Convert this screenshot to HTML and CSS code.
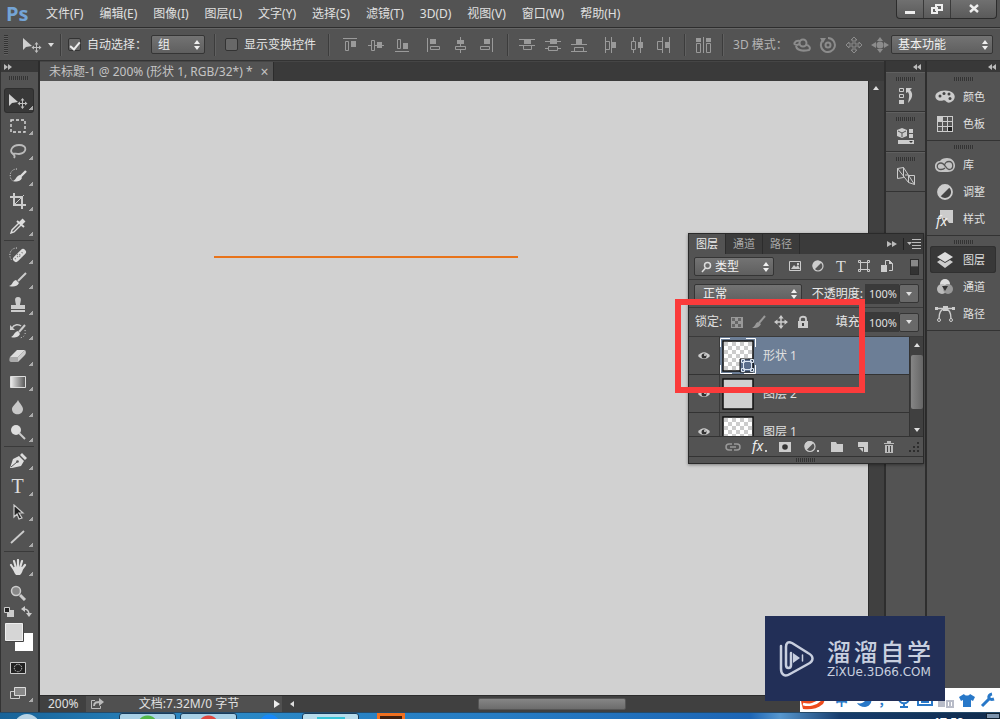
FILE: index.html
```html
<!DOCTYPE html>
<html lang="zh-CN">
<head>
<meta charset="utf-8">
<title>未标题-1</title>
<link rel="stylesheet" href="styles.css">
</head>
<body>
<svg class="defs" aria-hidden="true">
  <defs>
    <linearGradient id="g-grad"><stop offset="0" stop-color="#eee"/><stop offset="1" stop-color="#555"/></linearGradient>
    <pattern id="p-check" width="8" height="8" patternUnits="userSpaceOnUse"><path fill="#fff" d="M0 0h8v8H0z"/><path fill="#ccc" d="M0 0h4v4H0zM4 4h4v4H4z"/></pattern>
  </defs>
  <symbol id="updown" viewBox="0 0 8 10"><path fill="currentColor" d="M4 0l3 4H1zM4 10l3-4H1z"/></symbol>
  <symbol id="left2" viewBox="0 0 8 6"><path fill="currentColor" d="M4 0v6L0 3zM8 0v6L4 3z"/></symbol>
  <symbol id="right2" viewBox="0 0 8 6"><path fill="currentColor" d="M0 0v6l4-3zM4 0v6l4-3z"/></symbol>
  <symbol id="down" viewBox="0 0 6 4"><path fill="currentColor" d="M0 0h6L3 4z"/></symbol>
  <symbol id="up" viewBox="0 0 6 4"><path fill="currentColor" d="M0 4h6L3 0z"/></symbol>
  <symbol id="move" viewBox="0 0 20 16"><path fill="#d0d0d0" d="M1 1v12l3-3 6-1z"/><path fill="none" stroke="#c0c0c0" d="M14.500 6.500v8M10.500 10.500h8"/><path fill="#c0c0c0" d="M14.500 5l2 2.500h-4zM14.500 16l2-2.500h-4zM9.500 10.500L12 8.500v4zM19.500 10.500L17 8.500v4z"/></symbol>
  <symbol id="cross" viewBox="0 0 16 16"><path fill="none" stroke="currentColor" stroke-width="1.600" d="M8 3v10M3 8h10"/><path fill="currentColor" d="M8 0l3 4H5zM8 16l3-4H5zM0 8l4-3v6zM16 8l-4-3v6z"/></symbol>
</svg>

<header class="menubar">
  <span class="logo">Ps</span>
  <nav class="menus">
    <button>文件(F)</button><button>编辑(E)</button><button>图像(I)</button><button>图层(L)</button><button>文字(Y)</button><button>选择(S)</button><button>滤镜(T)</button><button>3D(D)</button><button>视图(V)</button><button>窗口(W)</button><button>帮助(H)</button>
  </nav>
  <div class="winctl">
    <button aria-label="最小化"><svg width="12" height="12"><path fill="#eee" d="M1 8h10v3H1z"/></svg></button>
    <button aria-label="还原"><svg width="12" height="12" fill="none" stroke="#eee" stroke-width="2"><path d="M5 2h6v5H5zM1 5h5v5H1z"/></svg></button>
    <button class="close" aria-label="关闭"><svg width="12" height="12"><path stroke="#eee" stroke-width="2.400" d="M2 2l8 7M10 2L2 9"/></svg></button>
  </div>
</header>

<section class="options">
  <i class="vgrip"></i>
  <svg class="cur" width="20" height="16"><use href="#move"/></svg>
  <svg class="caret" width="6" height="4"><use href="#down"/></svg>
  <i class="sep"></i>
  <label class="check"><input type="checkbox" checked>自动选择：</label>
  <span class="drop drop-group"><select aria-label="自动选择"><option>组</option></select><svg width="8" height="10"><use href="#updown"/></svg></span>
  <i class="sep"></i>
  <label class="check"><input type="checkbox">显示变换控件</label>
  <i class="sep wide"></i>
  <div class="aligns">
    <svg width="16" height="16"><path class="l" d="M1 1.500h14M3.500 4.500h3v9h-3z"/><path class="f" d="M9 4h5v6H9z"/></svg>
    <svg width="16" height="16"><path class="l" d="M0 8.500h3M7 8.500h9M3.500 3.500h3v10h-3z"/><path class="f" d="M9 5h5v6H9z"/></svg>
    <svg width="16" height="16"><path class="l" d="M1 14.500h14M3.500 2.500h3v9h-3z"/><path class="f" d="M9 6h5v6H9z"/></svg>
  </div>
  <div class="aligns">
    <svg width="16" height="16"><path class="l" d="M1.500 1v14M4.500 9.500h9v3h-9z"/><path class="f" d="M4 2h6v5H4z"/></svg>
    <svg width="16" height="16"><path class="l" d="M8.500 0v3M8.500 6v3M8.500 13v3M3.500 9.500h10v3h-10z"/><path class="f" d="M5 3h7v4H5z"/></svg>
    <svg width="16" height="16"><path class="l" d="M14.500 1v14M2.500 9.500h9v3h-9z"/><path class="f" d="M6 2h6v5H6z"/></svg>
  </div>
  <i class="sep"></i>
  <div class="aligns">
    <svg width="16" height="16"><path class="l" d="M0 2.500h16M0 8.500h16M4.500 8.500h8v4h-8z"/><path class="f" d="M5 2h7v5H5z"/></svg>
    <svg width="16" height="16"><path class="l" d="M0 4.500h16M0 11.500h3M13 11.500h3M3.500 9.500h9v4h-9z"/><path class="f" d="M5 2h7v5H5z"/></svg>
    <svg width="16" height="16"><path class="l" d="M0 7.500h16M0 14.500h16M3.500 10.500h9v4h-9z"/><path class="f" d="M5 2h6v5H5z"/></svg>
  </div>
  <div class="aligns">
    <svg width="16" height="16"><path class="l" d="M2.500 0v16M8.500 0v16M2.500 4.500h4v8h-4z"/><path class="f" d="M8 5h5v6H8z"/></svg>
    <svg width="16" height="16"><path class="l" d="M4.500 0v4M4.500 13v3M11.500 0v16M2.500 4.500h4v8h-4z"/><path class="f" d="M9 5h5v6H9z"/></svg>
    <svg width="16" height="16"><path class="l" d="M7.500 0v16M14.500 0v16M2.500 4.500h5v8h-5z"/><path class="f" d="M10 5h5v6h-5z"/></svg>
  </div>
  <i class="sep"></i>
  <svg class="auto" width="16" height="16"><path class="f" d="M0 1h5v4H0zM10 1h5v4h-5z"/><path class="l" d="M.5 6.500h4v9h-4zM7.500 0v16M10.500 6.500h4v9h-4z"/></svg>
  <i class="sep"></i>
  <span class="mode">3D 模式：</span>
  <div class="modes">
    <svg width="18" height="16" fill="none" stroke="#8c8c8c" stroke-width="2"><circle cx="10" cy="6" r="3.500"/><path d="M7 4C2 3-1 8 4 8l3-1M3 9c1 5 8 5 13 4 2-2 0-5-3-5"/></svg>
    <svg width="18" height="16" fill="none" stroke="#8c8c8c" stroke-width="2"><circle cx="9" cy="8" r="2.500"/><path d="M4 3a7 7 0 1 0 5-2"/><path fill="#8c8c8c" stroke="none" d="M1 1h6L4 6z"/></svg>
    <svg width="18" height="16" fill="#555" stroke="#8c8c8c"><path d="M9 0l3 3h-2v4h4V5l3 3-3 3V9h-4v4h2l-3 3-3-3h2V9H4v2L1 8l3-3v2h4V3H6z"/></svg>
    <svg width="18" height="16" fill="#8c8c8c"><circle cx="9" cy="8" r="3.500"/><path d="M9 0l3 4H6zM9 16l3-4H6zM0 8l5-3v6zM18 8l-5-3v6z"/></svg>
  </div>
  <span class="drop drop-work"><select aria-label="工作区"><option>基本功能</option></select><svg width="8" height="10"><use href="#updown"/></svg></span>
</section>

<main class="work">
  <aside class="tools">
    <div class="colhead"><svg width="8" height="6"><use href="#right2"/></svg></div>
    <i class="grip"></i>
    <div class="tgroup six">
      <button class="tool on" aria-label="移动"><svg width="20" height="16"><use href="#move"/></svg></button>
      <button class="tool" aria-label="选框"><svg width="20" height="16"><path fill="none" stroke="#ddd" stroke-width="1.400" stroke-dasharray="3 2" d="M3 2h14v12H3z"/></svg></button>
      <button class="tool" aria-label="套索"><svg width="20" height="16"><path fill="none" stroke="#bbb" stroke-width="1.800" d="M5 11C1 8 4 2 11 2c9 0 8 8 0 9-3 0-6-1-6 0s3 1 1 4"/></svg></button>
      <button class="tool" aria-label="快速选择"><svg width="20" height="16"><path fill="none" stroke="#ddd" stroke-dasharray="1 1.500" d="M9 1C0 1 1 13 6 13"/><path stroke="#ddd" stroke-width="2.400" d="M18 3l-6 6"/><path fill="#ddd" d="M12 7l2 3c-2 4-6 4-9 3 3-1 3-5 7-6z"/></svg></button>
      <button class="tool" aria-label="裁剪"><svg width="20" height="16"><path fill="none" stroke="#ccc" stroke-width="2" d="M6 0v12h12M2 4h12v12"/><path stroke="#ccc" d="M7 11l9-9"/></svg></button>
      <button class="tool" aria-label="吸管"><svg width="20" height="16"><path fill="none" stroke="#ddd" stroke-width="1.400" d="M11 5L4 12l-1 3 3-1 7-7"/><path stroke="#ddd" stroke-width="4" d="M12 6l4-4"/><path stroke="#ddd" stroke-width="2" d="M9 3l7 6"/></svg></button>
    </div>
    <div class="tgroup eight">
      <button class="tool" aria-label="修复画笔"><svg width="20" height="16"><path fill="none" stroke="#ddd" stroke-dasharray="1 1.500" d="M9 1C0 1 1 12 4 13"/><path stroke="#ddd" stroke-width="6" stroke-linecap="round" d="M8 12l7-7"/><path stroke="#777" stroke-width="1.500" stroke-dasharray="1 2" d="M7 12l9-8M9 7l5 4"/></svg></button>
      <button class="tool" aria-label="画笔"><svg width="20" height="16"><path stroke="#ccc" stroke-width="2" d="M18 1l-8 8"/><path fill="#ddd" d="M8 8l3 3c-2 4-6 4-10 3 4-1 3-5 7-6z"/></svg></button>
      <button class="tool" aria-label="图章"><svg width="20" height="16"><path fill="#ccc" d="M10 0c5 0 2 6 2 8h5v4H3V8h5c0-2-3-8 2-8zM3 13h14v2H3z"/></svg></button>
      <button class="tool" aria-label="历史画笔"><svg width="20" height="16"><path fill="none" stroke="#ccc" stroke-width="1.500" d="M4 5c2-4 7-4 9-2"/><path fill="#ccc" d="M2 2v5h5z"/><path stroke="#ccc" stroke-width="2" d="M17 2l-6 7"/><path fill="#ddd" d="M10 8l2 3c-2 4-6 4-9 3 3-1 3-5 7-6z"/><path fill="none" stroke="#ccc" stroke-dasharray="1 2" d="M17 7c1 5-1 7-5 8"/></svg></button>
      <button class="tool" aria-label="橡皮擦"><svg width="20" height="16"><path fill="#ddd" d="M9 2h8l-7 7H2z"/><path fill="#aaa" d="M2 9h8v5H3c-2 0-2-3-1-5z"/><path fill="#ccc" d="M10 9l7-7c2 3 0 5-1 6l-6 6z"/></svg></button>
      <button class="tool" aria-label="渐变"><svg width="20" height="16"><path fill="url(#g-grad)" stroke="#ddd" d="M2.500 2.500h15v11h-15z"/></svg></button>
      <button class="tool" aria-label="模糊"><svg width="20" height="16"><path fill="#c8c8c8" d="M10 1c2 4 5 6 5 9 0 7-11 7-11 0 0-3 4-5 6-9z"/></svg></button>
      <button class="tool" aria-label="减淡"><svg width="20" height="16"><circle cx="8" cy="6" r="5" fill="#ddd"/><path stroke="#ccc" stroke-width="2" d="M11 9l6 6"/></svg></button>
    </div>
    <div class="tgroup four">
      <button class="tool" aria-label="钢笔"><svg width="20" height="16"><path fill="#ddd" d="M2 15l3-9 6-3 5 5-3 5-9 2zM12 2l2-2 5 5-2 2z"/><path stroke="#555" d="M3 14l6-5"/><circle cx="9.500" cy="8.500" r="1.300" fill="#555"/></svg></button>
      <button class="tool" aria-label="文字"><span class="tee">T</span></button>
      <button class="tool" aria-label="路径选择"><svg width="20" height="16"><path fill="#222" stroke="#ccc" stroke-width="1.200" d="M6 1v12l3-3 2 5 3-1-3-5h4z"/></svg></button>
      <button class="tool" aria-label="直线"><svg width="20" height="16"><path stroke="#ccc" stroke-width="1.800" d="M3 14L16 2"/></svg></button>
    </div>
    <div class="tgroup two">
      <button class="tool" aria-label="抓手"><svg width="20" height="16"><path fill="none" stroke="#ddd" stroke-width="2.200" stroke-linecap="round" d="M3 6l4 6M6 2l2 7M10 1v8M14 2l-2 7M17 6l-3 4"/><path fill="#ddd" d="M6 8h9c0 4-1 6-3 8H8c-2-2-3-5-2-8z"/></svg></button>
      <button class="tool plain" aria-label="缩放"><svg width="20" height="16"><circle cx="8" cy="6" r="4.500" fill="#888" stroke="#ccc" stroke-width="1.500"/><path stroke="#ccc" stroke-width="3" d="M12 10l5 5"/></svg></button>
    </div>
    <div class="mini">
      <svg width="12" height="12"><path fill="#ccc" d="M4 4h7v7H4z"/><path fill="#222" stroke="#ccc" d="M1.500 1.500h5v5h-5z"/></svg>
      <svg width="12" height="12"><path fill="none" stroke="#ccc" stroke-width="1.500" d="M3 3c4 0 5 2 5 6"/><path fill="#ccc" d="M0 3l4-3v6zM5 7h6l-3 4z"/></svg>
    </div>
    <svg class="swatches" width="30" height="30"><path fill="#fff" d="M11 11h18v18H11z"/><path fill="#d6d6d6" stroke="#eee" d="M1.500 1.500h17v17h-17z"/><path fill="none" stroke="#444" d="M19.500 1v18.500H1"/></svg>
    <button class="tool plain" aria-label="快速蒙版"><svg width="20" height="16"><path fill="#222" stroke="#ccc" d="M2.500 2.500h15v11h-15z"/><circle cx="10" cy="8" r="3.700" fill="none" stroke="#ccc" stroke-dasharray="1.500 1"/></svg></button>
    <button class="tool" aria-label="屏幕模式"><svg width="20" height="16"><path fill="#555" stroke="#ccc" d="M2.500 6.500h9v7h-9z"/><path fill="#888" stroke="#ddd" d="M6.500 2.500h11v8h-11z"/></svg></button>
  </aside>

  <section class="doc">
    <div class="tabs"><div class="tab"><span>未标题-1 @ 200% (形状 1, RGB/32*) *</span><button aria-label="关闭文档">×</button></div></div>
    <div class="stage">
      <div class="canvas"><svg class="shape" viewBox="0 0 828 4"><path stroke="#e8731a" stroke-width="2" d="M174 2h304"/></svg></div>
      <div class="vscroll"><svg width="6" height="4"><use href="#up"/></svg></div>
    </div>
    <div class="status">
      <span class="zoom">200%</span>
      <div class="info"><svg width="14" height="12" fill="none" stroke="#bbb"><path d="M5 2.500H1.500v8h9V8"/><path stroke-width="2" d="M4 8c0-4 3-4 6-4"/><path fill="#bbb" stroke="none" d="M9 0l5 4-5 4z"/></svg><span>文档:7.32M/0 字节</span><svg class="play" width="6" height="8"><path fill="#eee" d="M0 0l6 4-6 4z"/></svg></div>
      <svg width="4" height="6"><path fill="#ddd" d="M4 0v6L0 3z"/></svg>
      <div class="track"><i class="thumb"></i></div>
    </div>
  </section>

  <aside class="icons">
    <div class="colhead right"><svg width="8" height="6"><use href="#left2"/></svg></div>
    <div class="icell"><i class="grip"></i><svg width="20" height="20"><path fill="none" stroke="#ccc" d="M3.500 2.500h4v3h-4zM3.500 8.500h4v3h-4z"/><path fill="#ccc" d="M3 14h5v4H3zM10 7V2h6l-2 2c4 4 2 9-2 13 1-5 2-8-0-11z"/></svg></div>
    <div class="icell"><i class="grip"></i><svg width="20" height="20"><path fill="#ccc" d="M6 2l5 2v6l-5 2-5-2V4zM13 3h4v4h-4zM13 8h4v4h-4zM2 14h16v4H2z"/><path fill="none" stroke="#555" d="M2 5l4 2 4-2M6 7v4"/><path fill="#333" d="M13 15h4l-2 2z"/></svg></div>
    <div class="icell"><i class="grip"></i><svg width="20" height="20" fill="none" stroke="#ccc"><path d="M1.500 2.500l6-1v10l-6 1zM12.500 9.500h6v9l-6-2zM1.500 2.500l11 14M7.500 1.500l11 17M9 9h3"/></svg></div>
  </aside>

  <aside class="panels">
    <div class="colhead right"><svg width="8" height="6"><use href="#left2"/></svg></div>
    <div class="pgroup"><i class="grip"></i>
      <button><svg width="20" height="20"><path fill="#ccc" d="M10 3.500c12 0 12 10 5 12-4 1-4-3-7-2-10 2-11-10 2-10z"/><g fill="#444"><circle cx="5" cy="9" r="1.500"/><circle cx="9" cy="6.500" r="1.500"/><circle cx="14" cy="7" r="1.500"/><circle cx="15" cy="11.500" r="1.500"/></g></svg>颜色</button>
      <button><svg width="20" height="20"><path fill="#ccc" d="M2 2h16v16H2z"/><path fill="#555" d="M8 3h4v4H8zM13 3h4v4h-4zM3 8h4v4H3zM8 8h4v4H8zM13 8h4v4h-4zM3 13h4v4H3zM8 13h4v4H8z"/><path fill="#222" d="M13 13h4v4h-4z"/></svg>色板</button>
    </div>
    <div class="pgroup"><i class="grip"></i>
      <button><svg width="20" height="20"><path fill="#c4c4c4" d="M12 3c10 0 11 14 1 14H6C-2 17-2 6 5 6c1-2 4-3 7-3z"/><path fill="none" stroke="#555" stroke-width="1.300" d="M10 13c-1 1-2 1.500-4 1.500C1 14.500 1 8 6 8c4 0 5 6.500 8 6.500 5 0 5-8 0-8-3 0-4 2-4 3"/></svg>库</button>
      <button><svg width="20" height="20"><circle cx="10" cy="10" r="7" fill="#444" stroke="#ccc" stroke-width="1.800"/><path fill="#ccc" d="M15 5A7 7 0 1 0 5 15z"/></svg>调整</button>
      <button><svg width="20" height="20"><path fill="#ccc" d="M5 1h13v13h-4l-2-3-3 1 1-3H5z"/><text class="fx" x="1" y="17">fx</text></svg>样式</button>
    </div>
    <div class="pgroup"><i class="grip"></i>
      <button class="on"><svg width="20" height="20"><path fill="#ddd" d="M10 2l8 5-8 5-8-5z"/><path fill="#ccc" d="M2 12l3-2 5 3 5-3 3 2-8 6z"/></svg>图层</button>
      <button><svg width="20" height="20"><circle cx="10" cy="7" r="5" fill="#ddd"/><circle cx="7" cy="12" r="5" fill="#bbb"/><circle cx="13" cy="12" r="5" fill="#999"/><path fill="#333" d="M7 9h6l-3 5z"/></svg>通道</button>
      <button><svg width="20" height="20"><path fill="none" stroke="#ccc" stroke-width="1.400" d="M1 4.500h18M4 15c0-7 2-10 6-10s6 3 6 10"/><path fill="#ccc" d="M8 2h5v5H8zM0 3h3v3H0zM17 3h3v3h-3z"/><circle cx="4" cy="16" r="1.500" fill="#555" stroke="#ccc"/><circle cx="16" cy="16" r="1.500" fill="#555" stroke="#ccc"/></svg>路径</button>
    </div>
  </aside>
</main>

<footer class="taskbar">
  <i class="orb"></i><i class="app folder"></i><i class="app lit green"></i><i class="app lit red"></i><i class="app blue"></i><i class="app lit ps"></i><i class="app ai"></i>
  <span class="clock">17:59</span><i class="desk"></i>
</footer>

<section class="layers">
  <div class="ltabs">
    <button class="on">图层</button><button>通道</button><button>路径</button>
    <svg class="more" width="10" height="6" viewBox="0 0 8 6" preserveAspectRatio="none"><use href="#right2"/></svg>
    <i class="lsep"></i>
    <svg width="14" height="10"><path fill="#bbb" d="M0 3h5L2.500 6zM5 0h9v1H5zM5 3h9v1H5zM5 6h9v1H5zM5 9h9v1H5z"/></svg>
  </div>
  <div class="lrow filter">
    <span class="drop drop-kind"><svg width="12" height="12"><circle cx="7.500" cy="4.500" r="3" fill="none" stroke="#ddd" stroke-width="1.500"/><path stroke="#ddd" stroke-width="1.500" d="M5.500 7L2 11"/></svg><select aria-label="筛选类型"><option>类型</option></select><svg width="8" height="10"><use href="#updown"/></svg></span>
    <div class="kinds">
      <svg width="14" height="14"><path fill="none" stroke="#ccc" d="M1.500 2.500h11v9h-11z"/><path fill="#ccc" d="M3 10l3-4 2 2 2-2 2 4zM9 4h2v2H9z"/></svg>
      <svg width="14" height="14"><circle cx="7" cy="7" r="5" fill="#555" stroke="#ccc" stroke-width="1.200"/><path fill="#ccc" d="M10.500 3.500a5 5 0 1 0-7 7z"/></svg>
      <span class="tee small">T</span>
      <svg width="14" height="14" fill="none" stroke="#ccc"><path d="M3.500 3.500h7v7h-7zM1.500 1.500h2v2h-2zM10.500 1.500h2v2h-2zM1.500 10.500h2v2h-2zM10.500 10.500h2v2h-2z"/></svg>
      <svg width="14" height="14"><path fill="none" stroke="#ccc" d="M5.500 6V1.500h4l3 3v7H9"/><path fill="#ccc" d="M1 6h6v7H1zM9 1v4h4z"/></svg>
    </div>
    <i class="switch"></i>
  </div>
  <div class="lrow blend">
    <span class="drop drop-blend"><select aria-label="混合模式"><option>正常</option></select><svg width="8" height="10"><use href="#updown"/></svg></span>
    <label class="num"><span>不透明度:</span><input type="text" value="100%"></label>
    <button class="spin" aria-label="调整不透明度"><svg width="6" height="4"><use href="#down"/></svg></button>
  </div>
  <div class="lrow lock">
    <span class="lname">锁定:</span>
    <div class="locks">
      <svg width="14" height="14"><path fill="#999" d="M1 2h12v11H1z"/><path fill="#666" d="M2 3h3v3H2zM8 3h3v3H8zM5 6h3v3H5zM2 9h3v3H2zM8 9h3v3H8z"/></svg>
      <svg width="14" height="14"><path stroke="#999" stroke-width="2" d="M13 1L7 8"/><path fill="#999" d="M6 7l3 2c-2 4-5 4-9 4 4-2 3-5 6-6z"/></svg>
      <svg class="bright" width="14" height="14"><use href="#cross"/></svg>
      <svg width="14" height="14"><path fill="none" stroke="#ccc" stroke-width="1.800" d="M4 7V4c0-3 6-3 6 0v3"/><path fill="#ccc" d="M2 6h10v7H2z"/><path fill="#444" d="M6 8h2v3H6z"/></svg>
    </div>
    <label class="num"><span>填充:</span><input type="text" value="100%"></label>
    <button class="spin" aria-label="调整填充"><svg width="6" height="4"><use href="#down"/></svg></button>
  </div>
  <div class="lbody">
    <div class="list">
      <div class="layer on">
        <button class="eye" aria-label="可见"><svg width="14" height="10"><path fill="#ccc" d="M1 5c3-5 9-5 12 0-3 4-9 4-12 0z"/><circle cx="7" cy="5" r="2.500" fill="#333"/><circle cx="8" cy="4" r="1" fill="#ddd"/></svg></button>
        <svg class="pic" width="36" height="36"><path fill="url(#p-check)" stroke="#111" stroke-width="1.500" d="M3 3h30v30H3z"/><path fill="#5b6e8c" stroke="#111" d="M20 21h13v13H20z"/><path fill="none" stroke="#dde6f2" d="M23.500 23.500h8v8h-8zM21.500 21.500h3v3h-3zM30.500 21.500h3v3h-3zM21.500 30.500h3v3h-3zM30.500 30.500h3v3h-3z"/><path fill="none" stroke="#fff" d="M.5 9V.5H10M26 .5h9.500V9M35.500 27v8.500H24M12 35.500H.5V27"/></svg>
        <span>形状 1</span>
      </div>
      <div class="layer">
        <button class="eye" aria-label="可见"><svg width="14" height="10"><path fill="#ccc" d="M1 5c3-5 9-5 12 0-3 4-9 4-12 0z"/><circle cx="7" cy="5" r="2.500" fill="#333"/><circle cx="8" cy="4" r="1" fill="#ddd"/></svg></button>
        <svg class="pic" width="36" height="36"><path fill="#d0d0d0" stroke="#111" stroke-width="1.500" d="M3 3h30v30H3z"/></svg>
        <span>图层 2</span>
      </div>
      <div class="layer">
        <button class="eye" aria-label="可见"><svg width="14" height="10"><path fill="#ccc" d="M1 5c3-5 9-5 12 0-3 4-9 4-12 0z"/><circle cx="7" cy="5" r="2.500" fill="#333"/><circle cx="8" cy="4" r="1" fill="#ddd"/></svg></button>
        <svg class="pic" width="36" height="36"><path fill="url(#p-check)" stroke="#111" stroke-width="1.500" d="M3 3h30v30H3z"/></svg>
        <span>图层 1</span>
      </div>
    </div>
    <div class="lscroll"><svg width="6" height="4"><use href="#up"/></svg><i class="knob"></i><svg width="6" height="4"><use href="#down"/></svg></div>
  </div>
  <div class="lfoot">
    <svg width="16" height="14" fill="none" stroke="#999" stroke-width="1.500"><path d="M7 4H4C0 4 0 10 4 10h3M9 4h3c4 0 4 6 0 6H9M5 7h6"/></svg>
    <svg width="16" height="14"><text class="fx" x="1" y="11">fx</text><path fill="#ccc" d="M14 10h2v2h-2z"/></svg>
    <svg width="16" height="14"><path fill="#ccc" d="M2 2h12v10H2z"/><circle cx="8" cy="7" r="2.800" fill="#333"/></svg>
    <svg width="16" height="14"><circle cx="7" cy="6.500" r="5" fill="#555" stroke="#ccc" stroke-width="1.200"/><path fill="#ccc" d="M10.500 3a5 5 0 1 0-7 7zM14 10h2v2h-2z"/></svg>
    <svg width="16" height="14"><path fill="#ccc" d="M2 2h5l1 2h6v8H2z"/></svg>
    <svg width="16" height="14"><path fill="#ccc" d="M3 2h10v10H9V7H3z"/><path fill="#ccc" d="M4 8h4v4z"/></svg>
    <svg width="16" height="14"><path fill="#bbb" d="M3 3h10v1H3zM6 1h4v2H6zM4 5h8v8H4z"/><path stroke="#444" d="M6.500 6v6M9.500 6v6"/></svg>
    <svg width="10" height="12"><path fill="#2e2e2e" d="M8 1h2v2H8zM8 5h2v2H8zM4 5h2v2H4zM0 9h2v2H0zM4 9h2v2H4zM8 9h2v2H8z"/></svg>
  </div>
  <div class="lgrip"><i class="grip"></i></div>
</section>

<div class="frame"></div>

<section class="ime">
  <svg class="sogou" width="26" height="24"><path fill="#ee4b1c" d="M0 2h22c3 6 3 11 1 14-6 5-13 6-20 5C1 15 0 8 0 2z"/><path fill="none" stroke="#fff" stroke-width="2.500" d="M3 16c6 2 13 0 17-4"/></svg>
  <span class="cn">中</span>
  <svg width="16" height="16"><path fill="#2878c8" d="M10 1c8 5 4 14-2 14-4 0-7-2-8-4 6 2 11-3 10-10z"/></svg>
  <span>，</span>
  <svg width="16" height="16" fill="none" stroke="#2878c8" stroke-width="2"><path d="M3 6c0 7 10 7 10 0M8 11v4M4 15h8"/><path stroke-width="5" d="M8 1v6"/></svg>
  <svg width="16" height="16"><path fill="none" stroke="#2878c8" stroke-width="2" d="M1 4h14v9H1zM4 10h8M4 7h8"/></svg>
  <svg width="16" height="16" fill="#b8bcc8"><circle cx="4" cy="3" r="3"/><path d="M0 7h7v8H0zM8 8h8v8H8z"/><path fill="#fff" d="M10 10h1v4h-1zM13 10h1v4h-1z"/></svg>
  <svg width="16" height="16"><path fill="#2878c8" d="M5 2c1 2 5 2 6 0l5 3-2 4-2-1v7H4V8L2 9 0 5z"/></svg>
  <svg width="16" height="16"><path stroke="#2878c8" stroke-width="3" d="M2 14l7-7"/><path fill="none" stroke="#2878c8" stroke-width="3" d="M12 2C7 3 8 9 14 7"/></svg>
</section>

<section class="brand">
  <svg width="36" height="38" fill="none" stroke="#c8cfdf" stroke-width="2.500" stroke-linecap="round" stroke-linejoin="round"><path d="M2 6v23c0 6 4 8 9 5l18-10c6-3 6-8 0-11L13 3C9 1 7 3 7 7v18c0 4 5 4 5 0V13"/><path fill="#c8cfdf" stroke="none" d="M14 13l7 5-7 5z"/><path stroke-width="1.500" d="M23.500 15v6"/></svg>
  <div class="words"><strong><b>溜</b><b>溜</b><b>自</b><b>学</b></strong><span>ZiXUe.3D66.COM</span></div>
</section>
</body>
</html>
```

FILE: styles.css
```css
* { box-sizing: border-box; }
body {
  margin: 0;
  height: 100vh;
  display: flex;
  flex-direction: column;
  overflow: hidden;
  position: relative;
  background: #535353;
  color: #e0e0e0;
  font: 12px/16px "Noto Sans", "Noto Sans CJK SC", sans-serif;
}
button, select, input { font: inherit; color: inherit; }
button { border: 0; padding: 0; background: none; }
svg { display: block; flex: none; }
.defs { width: 0; height: 0; position: absolute; }

.menubar { height: 28px; flex: none; display: flex; align-items: center; border-bottom: 1px solid #2e2e2e; }
.logo { width: 46px; padding-left: 6px; color: #74a4d6; font: bold 20px/24px "Open Sans", sans-serif; }
.menus { display: flex; gap: 16px; flex: 1; white-space: nowrap; }
.winctl { display: flex; align-self: flex-start; margin-right: 3px; border: 1px solid #2c2c2c; border-top: 0; border-radius: 0 0 4px 4px; background: linear-gradient(#707070, #5a5a5a); }
.winctl button { width: 27px; height: 18px; display: grid; place-items: center; border-right: 1px solid #3a3a3a; }
.winctl .close { width: 45px; border: 0; }

.options { height: 33px; flex: none; display: flex; align-items: center; border-top: 1px solid #666; border-bottom: 1px solid #333; color: #e4e4e4; white-space: nowrap; }
.vgrip { width: 4px; height: 20px; margin: 0 14px 0 4px; background: repeating-linear-gradient(#333 0 1px, #606060 1px 2px); }
.caret { margin: 0 6px; color: #ddd; }
.sep { width: 2px; height: 22px; margin: 0 9px; background: #3c3c3c; border-right: 1px solid #606060; flex: none; }
.sep.wide { margin: 0 12px; }
.options .caret + .sep { margin: 0 6px 0 0; }
.check { display: flex; align-items: center; gap: 6px; }
.check input { appearance: none; width: 13px; height: 13px; margin: 0; border: 1px solid #333; border-radius: 2px; background: #686868; display: grid; place-items: center; }
.check input:checked::before { content: ""; width: 4px; height: 8px; border: solid #eee; border-width: 0 2px 2px 0; transform: rotate(40deg); }
.drop { display: flex; align-items: center; height: 19px; padding: 0 6px; border: 1px solid #353535; border-radius: 2px; background: linear-gradient(#737373, #5f5f5f); color: #f0f0f0; }
.drop select { appearance: none; flex: 1; min-width: 0; border: 0; padding: 0; background: none; height: 17px; line-height: 17px; }
.drop-group { width: 54px; margin-left: 4px; padding: 0 3px 0 6px; }
.drop-work { width: 102px; margin-left: auto; margin-right: 7px; padding: 0 3px 0 6px; }
.aligns { display: flex; gap: 10px; margin-right: 16px; }
.aligns + .sep { margin-left: -3px; margin-right: 10px; }
.auto { margin: 0 1px 0 0; }
.l { fill: none; stroke: #9a9a9a; }
.f { fill: #9a9a9a; }
.mode { color: #b4b4b4; width: 60px; }
.modes { display: flex; gap: 8px; }

.work { flex: 1; min-height: 0; display: grid; grid-template-columns: 40px minmax(0, 1fr) 41px 75px; background: #3a3a3a; }
.colhead { height: 11px; flex: none; display: flex; align-items: center; padding: 0 3px; background: #383838; color: #bbb; }
.colhead.right { justify-content: flex-end; padding: 0 4px; }
.grip { display: block; flex: none; width: 20px; height: 4px; background: repeating-linear-gradient(90deg, #333 0 1px, #555 1px 2px); }

.tools { display: flex; flex-direction: column; align-items: center; padding-right: 2px; background: #535353; border-left: 1px solid #333; border-right: 2px solid #2c2c2c; min-height: 0; overflow: hidden; }
.tools .colhead { align-self: stretch; margin-right: -2px; }
.tools > .grip { margin: 4px 0 7px; }
.tgroup { display: flex; flex-direction: column; justify-content: space-between; flex: none; padding: 1px 0; border-bottom: 1px solid #3a3a3a; }
.six { height: 154px; }
.eight { height: 206px; }
.four { height: 105px; }
.two { height: 54px; padding-top: 2px; border: 0; }
.tool { width: 30px; height: 25px; flex: none; display: grid; place-items: center start; padding-left: 4px; background: linear-gradient(135deg, transparent 50%, #aaa 50%) 25px 18px / 4px 4px no-repeat; }
.tool.plain { background: none; }
.tool.on { background-color: #383838; border-radius: 3px; box-shadow: inset 0 0 0 1px #2e2e2e; }
.tee { width: 20px; text-align: center; font: 20px/20px "Liberation Serif", serif; color: #ddd; }
.tee.small { width: 14px; font-size: 16px; line-height: 16px; }
.mini { display: flex; gap: 6px; padding-right: 2px; }
.swatches { margin: 4px 0 3px; }

.doc { display: flex; flex-direction: column; min-width: 0; min-height: 0; }
.tabs { height: 20px; flex: none; display: flex; background: #3a3a3a; border-top: 1px solid #454545; }
.tab { display: flex; align-items: center; gap: 8px; padding: 0 4px 0 9px; background: #535353; border-right: 1px solid #2c2c2c; color: #c4c4c4; white-space: nowrap; }
.tab button { font-size: 14px; }
.stage { flex: 1; min-height: 0; display: flex; }
.canvas { flex: 1; background: #d1d1d1; }
.shape { width: 100%; margin-top: 174px; }
.vscroll { width: 16px; padding: 5px 4px; background: #404040; border-left: 1px solid #2c2c2c; color: #ddd; }
.status { height: 17px; flex: none; display: flex; align-items: center; background: #404040; border-top: 1px solid #2c2c2c; }
.zoom { width: 46px; padding-left: 8px; }
.info { display: flex; align-items: center; justify-content: space-between; width: 196px; height: 16px; padding: 0 2px 0 4px; margin-right: 8px; background: #505050; }
.track { flex: 1; padding: 0 0 0 184px; }
.thumb { display: block; width: 148px; height: 12px; border-radius: 2px; background: linear-gradient(#858585, #6c6c6c); border: 1px solid #555; }

.icons, .panels { background: #535353; border-left: 2px solid #2e2e2e; }
.icell { height: 40px; display: flex; flex-direction: column; align-items: center; gap: 5px; padding-top: 4px; border-bottom: 1px solid #333; border-top: 1px solid #606060; }
.pgroup { display: flex; flex-direction: column; padding: 4px 4px 3px 3px; border-bottom: 1px solid #333; }
.pgroup .grip { margin: 0 0 2px 24px; }
.panels .colhead + .pgroup { padding-top: 5px; }
.pgroup button { height: 27px; display: flex; align-items: center; gap: 8px; padding-left: 5px; border-radius: 3px; font-size: 11px; }
.pgroup button.on { background: #383838; box-shadow: inset 0 0 0 1px #303030; }
.fx { font: italic 14px "Noto Sans", sans-serif; fill: #eee; }

.taskbar { height: 7px; flex: none; display: flex; overflow: hidden; background: linear-gradient(90deg, #186398, #2b8ac6 20%, #267cc4 50%, #1d65b4 75%, #5797ce 78%, #173d6d 84%, #102b4b); border-top: 1px solid #254a68; }
.orb { width: 26px; height: 26px; margin: 1px 41px 0 14px; border-radius: 50%; background: #b8d4e6; }
.app { width: 57px; height: 12px; margin-right: 4px; background: radial-gradient(circle at 50% 12px, var(--c) 0 10px, transparent 11px); }
.app + .app { flex: none; }
.folder { width: 34px; --c: #d8b860; background: none; }
.lit { border: 1px solid #183c5c; border-radius: 3px; background-color: #a8d0e6; }
.green { --c: #50b848; }
.red { --c: #e04840; }
.blue { --c: #1888f8; }
.ps { background: linear-gradient(#34c4d8, #34c4d8) 14px 3px / 28px 8px no-repeat #b8dcec; }
.ai { width: 28px; margin-left: 14px; border: 3px solid #f07020; background: #402010; }
.clock { margin-left: auto; padding-top: 2px; font-weight: bold; color: #fff; }
.desk { width: 14px; margin-left: 22px; background: #7c93ac; border: 1px solid #102030; }

.layers { position: absolute; top: 233px; right: 76px; width: 236px; border: 1px solid #2a2a2a; background: #535353; box-shadow: 0 1px 3px #0006; }
.ltabs { height: 20px; display: flex; align-items: center; padding-right: 2px; background: #3b3b3b; }
.ltabs button { height: 20px; width: 37px; color: #aaa; border-right: 1px solid #2c2c2c; font-size: 11px; }
.ltabs .on { background: #535353; color: #eee; }
.ltabs .more { margin-left: auto; color: #bbb; }
.lsep { width: 1px; height: 12px; margin: 0 3px 0 6px; background: #222; }
.lrow { height: 28px; display: flex; align-items: center; padding: 0 4px 0 5px; border-bottom: 1px solid #3a3a3a; white-space: nowrap; }
.filter { height: 26px; }
.drop-kind { width: 80px; padding: 0 3px 0 5px; gap: 3px; }
.kinds { display: flex; gap: 9px; margin-left: 14px; }
.switch { width: 9px; height: 16px; margin-left: auto; border: 1px solid #2c2c2c; background: linear-gradient(#888 40%, #333 50%); }
.drop-blend { width: 108px; padding: 0 3px 0 8px; }
.num { display: flex; align-items: center; gap: 2px; margin-left: auto; }
.num span { color: #e8e8e8; }
.num input { width: 34px; height: 20px; border: 0; padding: 0 2px; background: #3a3a3a; font-size: 11px; text-align: right; }
.spin { width: 20px; height: 19px; display: grid; place-items: center; border: 1px solid #353535; border-radius: 2px; background: #696969; }
.lname { width: 36px; padding-left: 1px; }
.lrow.lock { height: 29px; }
.locks { display: flex; gap: 8px; }
.bright { color: #ccc; }
.lbody { display: flex; height: 99px; }
.list { flex: 1; overflow: hidden; }
.layer { height: 38px; display: flex; align-items: center; border-bottom: 1px solid #333; }
.layer.on { background: linear-gradient(90deg, #535353 31px, #6c7e96 31px); }
.eye { width: 31px; height: 37px; display: grid; place-items: center; border-right: 1px solid #3a3a3a; }
.pic { margin: 0 7px 0 0; }
.lscroll { width: 14px; display: flex; flex-direction: column; align-items: center; padding: 6px 0 4px; border-left: 1px solid #333; background: #404040; }
.knob { width: 12px; height: 54px; margin: 8px 0 auto; border-radius: 2px; background: linear-gradient(90deg, #858585, #666); }
.lfoot { height: 20px; display: flex; align-items: center; gap: 10px; padding-left: 36px; border-top: 1px solid #333; }
.lfoot svg:last-child { margin-left: 2px; }
.lgrip { height: 7px; padding-top: 1px; border-top: 1px solid #333; }
.lgrip .grip { margin: 0 auto; }

.frame { position: absolute; top: 299px; right: 135px; width: 190px; height: 94px; border: 6px solid #fb3b3b; }
.ime { position: absolute; right: 0; bottom: 7px; height: 24px; display: flex; align-items: center; gap: 5px; padding-right: 4px; background: #fff; color: #2878c8; font-weight: bold; font-size: 13px; }
.ime .cn { margin: 0 4px; }
.brand { position: absolute; right: 55px; bottom: 18px; width: 180px; height: 85px; display: flex; align-items: center; gap: 12px; padding-left: 14px; background: #222f57; color: #c8cfdf; }
.words { display: flex; flex-direction: column; gap: 2px; }
.words strong { display: flex; justify-content: space-between; font: 24px/24px "Noto Sans CJK SC", sans-serif; }
.words b { font-weight: 500; }
.words span { font: 12px/14px "DejaVu Sans", sans-serif; }
```
